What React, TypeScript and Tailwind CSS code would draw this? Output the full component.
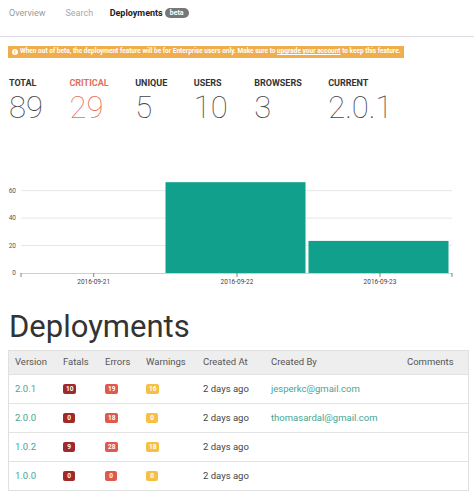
const stats = [
  { label: "TOTAL", value: "89" },
  { label: "CRITICAL", value: "29", critical: true },
  { label: "UNIQUE", value: "5" },
  { label: "USERS", value: "10" },
  { label: "BROWSERS", value: "3" },
  { label: "CURRENT", value: "2.0.1" },
];

const rows = [
  { version: "2.0.1", fatals: 10, errors: 19, warnings: 16, by: "jesperkc@gmail.com" },
  { version: "2.0.0", fatals: 0, errors: 18, warnings: 0, by: "thomasardal@gmail.com" },
  { version: "1.0.2", fatals: 9, errors: 28, warnings: 18, by: "" },
  { version: "1.0.0", fatals: 0, errors: 0, warnings: 0, by: "" },
];

const cols = "grid grid-cols-[48px_42px_41px_57px_68px_136px_67px]";

// chart drawn in page coords, svg starts at y=170
const y0 = 103; // 273 - 170
const perUnit = 82.3 / 60;

function Chart() {
  const gy = (v: number) => y0 - v * perUnit;
  const bars = [
    { x: 165.5, w: 140, v: 66.2, label: "2016-09-22", cx: 237 },
    { x: 308.5, w: 140, v: 23.4, label: "2016-09-23", cx: 380 },
  ];
  return (
    <svg width="474" height="120" className="block">
      {[20, 40, 60].map((v) => (
        <g key={v}>
          <line x1="21" x2="452" y1={gy(v)} y2={gy(v)} stroke="#e6e6e6" strokeWidth="1" />
          <text x="16" y={gy(v) + 2.2} textAnchor="end" fontSize="6.5" fill="#555" fontFamily="Roboto, sans-serif">
            {v}
          </text>
        </g>
      ))}
      <text x="16" y={y0 + 2} textAnchor="end" fontSize="6.5" fill="#555" fontFamily="Roboto, sans-serif">
        0
      </text>
      {bars.map((b) => (
        <rect key={b.label} x={b.x} y={gy(b.v)} width={b.w} height={b.v * perUnit} fill="#10a08b" />
      ))}
      <line x1="21" x2="452" y1={y0 + 0.5} y2={y0 + 0.5} stroke="#cfcfcf" strokeWidth="1" />
      {[21, 93.7, 237, 380, 452].map((x) => (
        <line key={x} x1={x} x2={x} y1={y0} y2={y0 + 4} stroke="#666" strokeWidth="0.8" />
      ))}
      {[
        { cx: 93.7, label: "2016-09-21" },
        ...bars,
      ].map((b) => (
        <text key={b.label} x={b.cx} y={y0 + 11} textAnchor="middle" fontSize="6.5" fill="#444" fontFamily="Roboto, sans-serif">
          {b.label}
        </text>
      ))}
    </svg>
  );
}

function Badge({ n, color }: { n: number; color: string }) {
  return (
    <span
      className={`inline-flex h-[10px] min-w-[12px] items-center justify-center rounded-[2px] px-[3px] text-[6.5px] leading-none font-bold text-white ${color}`}
    >
      {n}
    </span>
  );
}

export default function App() {
  return (
    <div className="w-[474px] h-[498px] overflow-hidden bg-white font-['Roboto',sans-serif] text-[#333]">
      {/* tabs */}
      <div className="flex h-[37px] items-start border-b border-[#dedbe6] pt-[7px] pl-[9px] text-[9px] leading-[12px]">
        <span className="text-[#9a9a9a]">Overview</span>
        <span className="ml-[20px] text-[#a8a8a8]">Search</span>
        <span className="ml-[16.5px] font-bold text-[#222]">Deployments</span>
        <span className="ml-[2px] mt-[1px] rounded-full bg-[#777] px-[5px] text-[7px] leading-[10px] font-bold text-white">
          beta
        </span>
      </div>

      {/* beta notice */}
      <div className="mt-[9px] ml-[8px] flex h-[12px] w-[396px] items-center bg-[#f0ad4e] pl-[4px] text-[6.5px] font-bold text-white">
        <span className="mr-[2px] flex h-[6px] w-[6px] items-center justify-center rounded-full bg-white text-[5px] leading-none text-[#f0ad4e]">
          !
        </span>
        <span>
          When out of beta, the deployment feature will be for Enterprise users only. Make sure to{" "}
          <span className="underline">upgrade your account</span> to keep this feature.
        </span>
      </div>

      {/* stats */}
      <div className="mt-[20px] ml-[9px] flex gap-[26.5px]">
        {stats.map((s) => (
          <div key={s.label} className="flex flex-col">
            <span
              className={`text-[9px] leading-[11px] font-bold ${s.critical ? "text-[#e4705c]" : "text-[#333]"}`}
            >
              {s.label}
            </span>
            <span
              className={`mt-[3px] text-[31px] leading-[31px] font-thin ${s.critical ? "text-[#e4705c]" : "text-[#444]"}`}
            >
              {s.value}
            </span>
          </div>
        ))}
      </div>

      <div className="mt-[47px]">
        <Chart />
      </div>

      <h1 className="mt-[22px] ml-[9px] text-[31px] leading-[30px] font-normal text-[#333]">Deployments</h1>

      {/* table */}
      <div className="mt-[8px] ml-[8px] w-[461px] border border-[#e0e0e0] text-[9.5px]">
        <div className={`${cols} h-[23px] items-center bg-[#eeeeee] text-[#555]`}>
          {["Version", "Fatals", "Errors", "Warnings", "Created At", "Created By", "Comments"].map((h) => (
            <div key={h} className="pl-[6px]">
              {h}
            </div>
          ))}
        </div>
        {rows.map((r) => (
          <div key={r.version} className={`${cols} h-[29px] items-center border-t border-[#e3e3e3] text-[#444]`}>
            <div className="pl-[6px] text-[#45a596]">{r.version}</div>
            <div className="pl-[6px] flex">
              <Badge n={r.fatals} color="bg-[#9e2a2d]" />
            </div>
            <div className="pl-[6px] flex">
              <Badge n={r.errors} color="bg-[#df5a4e]" />
            </div>
            <div className="pl-[6px] flex">
              <Badge n={r.warnings} color="bg-[#f6c142]" />
            </div>
            <div className="pl-[6px]">2 days ago</div>
            <div className="pl-[6px] text-[#45a596]">{r.by}</div>
            <div className="pl-[6px]"></div>
          </div>
        ))}
      </div>
    </div>
  );
}
